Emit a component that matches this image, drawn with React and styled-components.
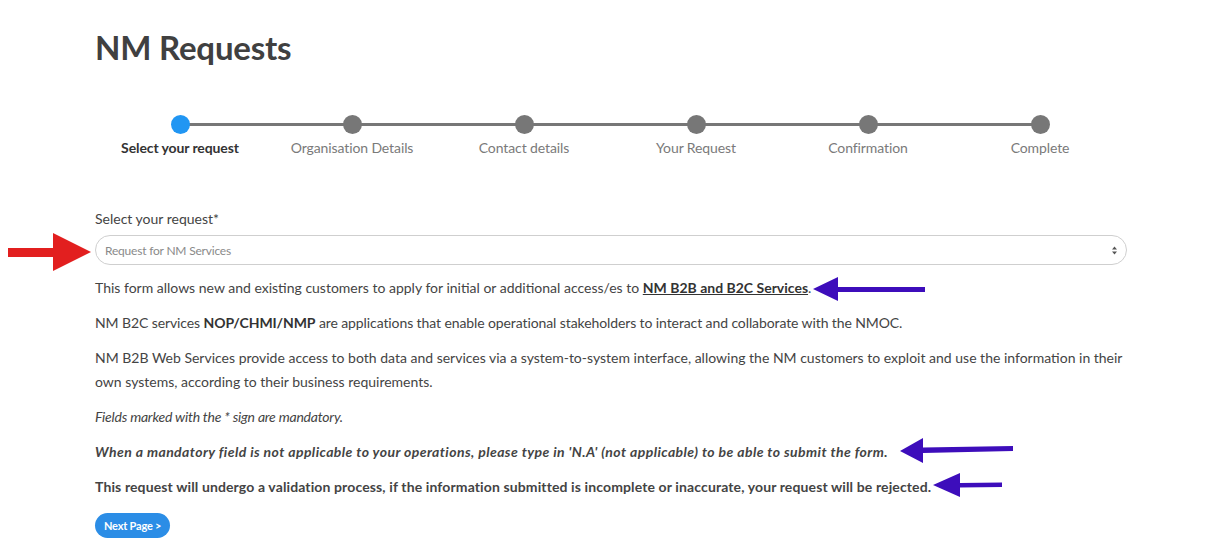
import React from "react";
import styled, { createGlobalStyle } from "styled-components";

const GlobalStyle = createGlobalStyle`
  html, body { margin: 0; padding: 0; background: #fff; }
  body { font-family: Lato, "Open Sans", sans-serif; color: #444; }
  * { box-sizing: border-box; }
`;

const Page = styled.div`
  position: relative;
  width: 1211px;
  min-height: 560px;
  padding: 27px 0 0 95px;
`;

const Container = styled.div`
  width: 1032px;
`;

const Title = styled.h1`
  margin: 0;
  font-size: 33px;
  line-height: 40px;
  font-weight: 700;
  color: #404040;
  letter-spacing: -0.2px;
`;

const Stepper = styled.ol`
  list-style: none;
  margin: 48px 0 0 -1px;
  padding: 0;
  display: grid;
  grid-template-columns: repeat(6, 172px);
`;

const Step = styled.li`
  position: relative;
  display: flex;
  flex-direction: column;
  align-items: center;
  &:not(:last-child)::after {
    content: "";
    position: absolute;
    top: 8px;
    left: 50%;
    width: 100%;
    height: 3px;
    background: #777;
    z-index: 0;
  }
`;

const Dot = styled.span`
  position: relative;
  z-index: 1;
  width: 19px;
  height: 19px;
  border-radius: 50%;
  background: ${(p) => (p.$active ? "#2196f3" : "#777")};
`;

const StepLabel = styled.span`
  margin-top: 4px;
  font-size: 14px;
  line-height: 20px;
  letter-spacing: -0.1px;
  color: ${(p) => (p.$active ? "#333" : "#7a7a7a")};
  font-weight: ${(p) => (p.$active ? 700 : 400)};
  white-space: nowrap;
`;

const FieldLabel = styled.label`
  display: block;
  margin-top: 51px;
  font-size: 14px;
  line-height: 20px;
  color: #444;
`;

const SelectBox = styled.div`
  margin-top: 6px;
  height: 30px;
  border: 1px solid #cfcfcf;
  border-radius: 15px;
  display: flex;
  align-items: center;
  justify-content: space-between;
  padding: 0 8px 0 9px;
  font-size: 12px;
  letter-spacing: -0.2px;
  color: #8a8a8a;
`;

const Chevrons = styled.svg`
  width: 7px;
  height: 9px;
`;

const Text = styled.p`
  margin: 11px 0 0;
  font-size: 14px;
  line-height: 24px;
  color: #444;
  font-style: ${(p) => (p.$italic ? "italic" : "normal")};
  font-weight: ${(p) => (p.$bold ? 700 : 400)};
  letter-spacing: ${(p) => p.$ls || "0px"};
  & + & { margin-top: ${(p) => (p.$tight ? "9px" : "11px")}; }
`;

const Strong = styled.strong`
  font-weight: 700;
  color: #333;
`;

const Link = styled.a`
  font-weight: 700;
  color: #333;
  text-decoration: underline;
`;

const Button = styled.button`
  margin-top: 14px;
  height: 25px;
  padding: 0 9px;
  border: none;
  border-radius: 13px;
  background: #2b8de6;
  color: #fff;
  font-family: inherit;
  font-size: 11px;
  font-weight: 700;
  letter-spacing: -0.2px;
  cursor: pointer;
`;

const Annotation = styled.svg`
  position: absolute;
  left: 0;
  top: 0;
  pointer-events: none;
`;

const steps = [
  "Select your request",
  "Organisation Details",
  "Contact details",
  "Your Request",
  "Confirmation",
  "Complete",
];

export default function App() {
  return (
    <>
      <GlobalStyle />
      <Page>
        <Container>
          <Title>NM Requests</Title>
          <Stepper>
            {steps.map((s, i) => (
              <Step key={s}>
                <Dot $active={i === 0} />
                <StepLabel $active={i === 0}>{s}</StepLabel>
              </Step>
            ))}
          </Stepper>
          <FieldLabel>Select your request*</FieldLabel>
          <SelectBox>
            <span>Request for NM Services</span>
            <Chevrons viewBox="0 0 7 9">
              <path d="M3.5 0.5 L6 3.5 H1 Z M3.5 8.5 L6 5.5 H1 Z" fill="#555" />
            </Chevrons>
          </SelectBox>
          <Text>
            This form allows new and existing customers to apply for initial or additional access/es to{" "}
            <Link href="#">NM B2B and B2C Services</Link>.
          </Text>
          <Text $ls="-0.1px">
            NM B2C services <Strong>NOP/CHMI/NMP</Strong> are applications that enable operational stakeholders to interact and collaborate with the NMOC.
          </Text>
          <Text>
            NM B2B Web Services provide access to both data and services via a system-to-system interface, allowing the NM customers to exploit and use the information in their own systems, according to their business requirements.
          </Text>
          <Text $italic $tight $ls="-0.22px">Fields marked with the * sign are mandatory.</Text>
          <Text $italic $bold $ls="0.42px">
            When a mandatory field is not applicable to your operations, please type in 'N.A' (not applicable) to be able to submit the form.
          </Text>
          <Text $bold $ls="0.12px">
            This request will undergo a validation process, if the information submitted is incomplete or inaccurate, your request will be rejected.
          </Text>
          <Button>Next Page &gt;</Button>
        </Container>
        <Annotation width="1211" height="560" viewBox="0 0 1211 560">
          <path d="M8 248 H53 V233 L91 252 L53 271 V257 H8 Z" fill="#e21f1f" />
          <path d="M925 287 H838 V277 L813 289 L838 301 V292 H925 Z" fill="#3d0dbb" />
          <path d="M1013 446 L923 447.5 V438 L900 451 L923 463 V453 L1013 451 Z" fill="#3d0dbb" />
          <path d="M1002 482.5 L960 483 V473 L933 485 L960 497 V487.5 L1002 487 Z" fill="#3d0dbb" />
        </Annotation>
      </Page>
    </>
  );
}
